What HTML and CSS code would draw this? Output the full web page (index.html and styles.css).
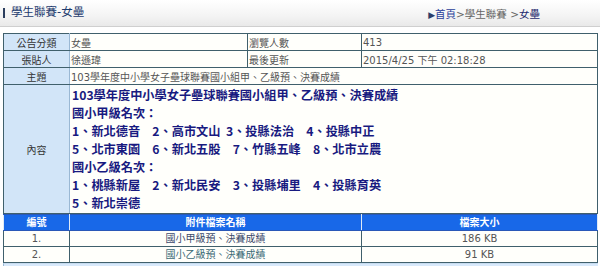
FILE: index.html
```html
<!DOCTYPE html>
<html lang="zh-Hant">

<head>
    <meta charset="UTF-8">
    <meta name="viewport" content="width=device-width, initial-scale=1.0">
    <link rel="stylesheet" href="styles.css">
</head>

<body>
    <div class="topbar">
        <h2 class="title">學生聯賽-女壘</h2>
        <div class="crumb">
            <span class="arrow">▶</span><a class="home">首頁</a>&gt;<span class="mid">學生聯賽</span> &gt;<span class="here">女壘</span>
        </div>
    </div>

    <div class="page">
        <table class="info">
            <colgroup>
                <col class="c1">
                <col class="c2">
                <col class="c3">
                <col class="c4">
            </colgroup>
            <tr>
                <th>公告分類</th>
                <td>女壘</td>
                <td class="sub">瀏覽人數</td>
                <td>413</td>
            </tr>
            <tr>
                <th>張貼人</th>
                <td>徐遜瑋</td>
                <td class="sub">最後更新</td>
                <td>2015/4/25 下午 02:18:28</td>
            </tr>
            <tr>
                <th>主題</th>
                <td colspan="3">103學年度中小學女子壘球聯賽國小組甲、乙級預、決賽成績</td>
            </tr>
            <tr>
                <th>內容</th>
                <td colspan="3" class="content">
                    103學年度中小學女子壘球聯賽國小組甲、乙級預、決賽成績<br>
                    國小甲級名次：<br>
                    1、新北德音　2、高市文山&nbsp; 3、投縣法治　4、投縣中正<br>
                    5、北市東園　6、新北五股　7、竹縣五峰　8、北市立農<br>
                    國小乙級名次：<br>
                    1、桃縣新屋　2、新北民安　3、投縣埔里　4、投縣育英<br>
                    5、新北崇德
                </td>
            </tr>
        </table>

        <table class="files">
            <colgroup>
                <col class="c1">
                <col class="f2">
                <col class="c4">
            </colgroup>
            <tr class="head">
                <th>編號</th>
                <th>附件檔案名稱</th>
                <th>檔案大小</th>
            </tr>
            <tr>
                <td>1.</td>
                <td><a class="file">國小甲級預、決賽成績</a></td>
                <td>186 KB</td>
            </tr>
            <tr>
                <td>2.</td>
                <td><a class="file alt">國小乙級預、決賽成績</a></td>
                <td>91 KB</td>
            </tr>
        </table>
        <div class="foot"></div>
    </div>
</body>

</html>
```

FILE: styles.css
```css
body {
    font-family: "DejaVu Sans", "Noto Sans CJK TC", sans-serif;
    background-color: #ffffff;
    margin: 0;
    padding: 0;
    color: #444;
}

.topbar {
    height: 26px;
    border-bottom: 1px solid #cfcfcf;
    background: linear-gradient(#ffffff, #f4f4f4 60%, #e9e9e9);
    display: flex;
    align-items: center;
    justify-content: space-between;
    padding: 0 60px 0 3px;
}

.title {
    margin: 0;
    font-size: 11.5px;
    font-weight: normal;
    color: #1d3b6e;
    border-left: 2px solid #2c3e5e;
    padding-left: 6px;
    line-height: 9px;
    height: 10px;
}

.crumb {
    font-size: 10.5px;
    color: #666;
}

.crumb .arrow {
    color: #2c3e6a;
    font-size: 9px;
}

.crumb .home {
    color: #2a3f9a;
}

.crumb .here {
    color: #1d2a6e;
}

.page {
    padding: 6px 3px 0 3px;
}

table {
    border-collapse: collapse;
    width: 594px;
    table-layout: fixed;
    font-size: 10px;
}

.c1 {
    width: 66px;
}

.c2 {
    width: 178px;
}

.c3 {
    width: 114px;
}

.c4 {
    width: 236px;
}

.f2 {
    width: 292px;
}

th,
td {
    border: 1px solid #40606c;
    height: 16px;
    padding: 0 1px;
    white-space: nowrap;
    overflow: hidden;
}

.info th {
    background-color: #d2e5f8;
    font-weight: normal;
    color: #333;
    border-color: #40606c #9ab8d4 #40606c #40606c;
}

.info td {
    background-color: #fffffb;
    color: #555;
}

.info .content {
    font-family: "Noto Sans CJK TC", "DejaVu Sans", sans-serif;
    font-weight: bold;
    font-size: 12.2px;
    line-height: 18px;
    color: #181a80;
    padding: 1px 2px 1px 2px;
}

.files th,
.files td {
    height: 15px;
    line-height: 14px;
}

.files .head th {
    background-color: #1868e8;
    color: #ffffff;
    font-weight: bold;
    border-color: #2a58b8 #dfeaf6 #2a58b8 #dfeaf6;
}

.files td {
    text-align: center;
    background-color: #fffffb;
    color: #555;
}

.file {
    color: #3c4a6c;
}

.file.alt {
    color: #3c6a76;
}

.foot {
    width: 594px;
    height: 8px;
    background-color: #d8e9fb;
    border-left: 1px solid #9ab8d4;
    border-top: 1px solid #c6dcf0;
}
```
